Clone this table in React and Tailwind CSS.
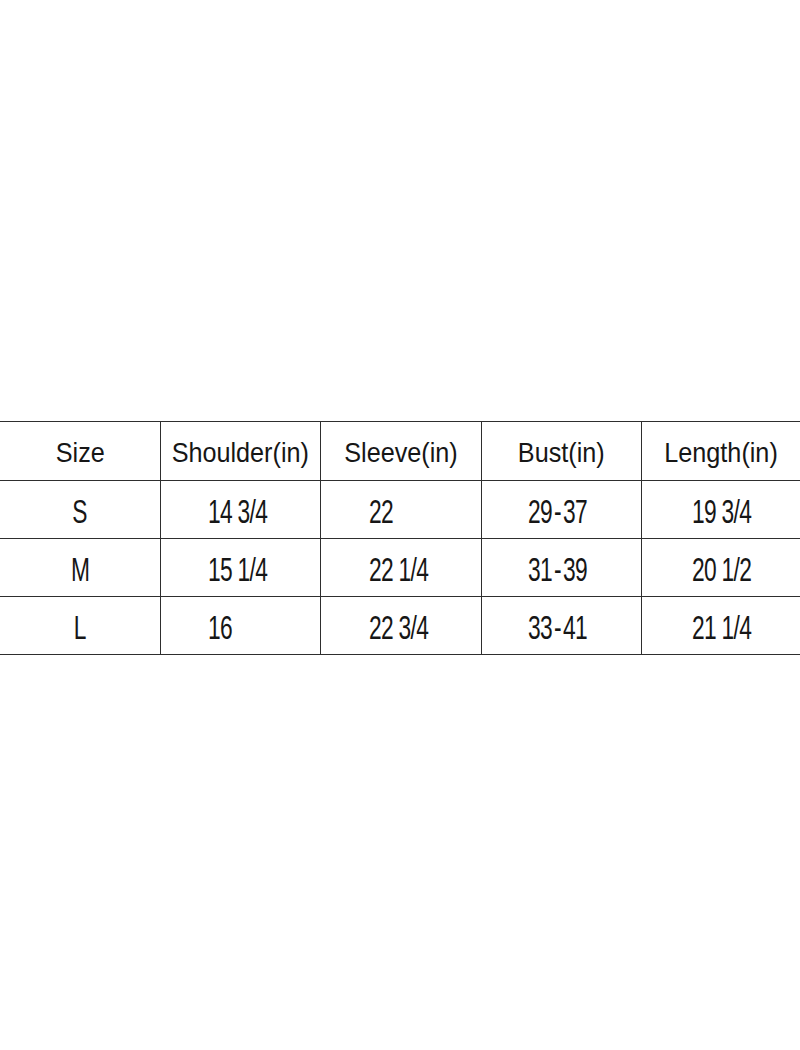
export default function App() {
  const headers = ["Size", "Shoulder(in)", "Sleeve(in)", "Bust(in)", "Length(in)"];
  const rows = [
    ["S", "14 3/4", "22", "29-37", "19 3/4"],
    ["M", "15 1/4", "22 1/4", "31-39", "20 1/2"],
    ["L", "16", "22 3/4", "33-41", "21 1/4"],
  ];
  const pads = ["", "pl-[47px]", "pl-[48px]", "pl-[46px]", "pl-[50px]"];
  const renderCell = (c) => {
    if (c.includes("-")) {
      const [a, b] = c.split("-");
      return (
        <>
          {a}
          <span className="mx-[3px]">-</span>
          {b}
        </>
      );
    }
    return c;
  };
  return (
    <div
      className="w-[800px] h-[1050px] bg-white text-[#161616] pt-[421px]"
      style={{ fontFamily: '"Liberation Sans", Arial, sans-serif' }}
    >
      <div className="grid grid-cols-[160px_160px_161px_160px_159px] border-t border-[#2e2e2e]">
        {headers.map((h, i) => (
          <div
            key={h}
            className={`h-[59px] flex items-center justify-center border-b border-[#2e2e2e] text-[28px] leading-none pt-[3px] ${i > 0 ? "border-l" : ""}`}
          >
            <span className="inline-block scale-x-[0.9] origin-center whitespace-nowrap">{h}</span>
          </div>
        ))}
        {rows.map((r) =>
          r.map((c, i) => (
            <div
              key={r[0] + i}
              className={`h-[58px] flex items-center border-b border-[#2e2e2e] text-[33px] leading-none pt-[4px] ${i > 0 ? "border-l justify-start " + pads[i] : "justify-center"}`}
            >
              <span
                className={`inline-block scale-x-[0.69] whitespace-nowrap tracking-[-1px] ${i > 0 ? "origin-left" : "origin-center"}`}
              >
                {renderCell(c)}
              </span>
            </div>
          ))
        )}
      </div>
    </div>
  );
}
